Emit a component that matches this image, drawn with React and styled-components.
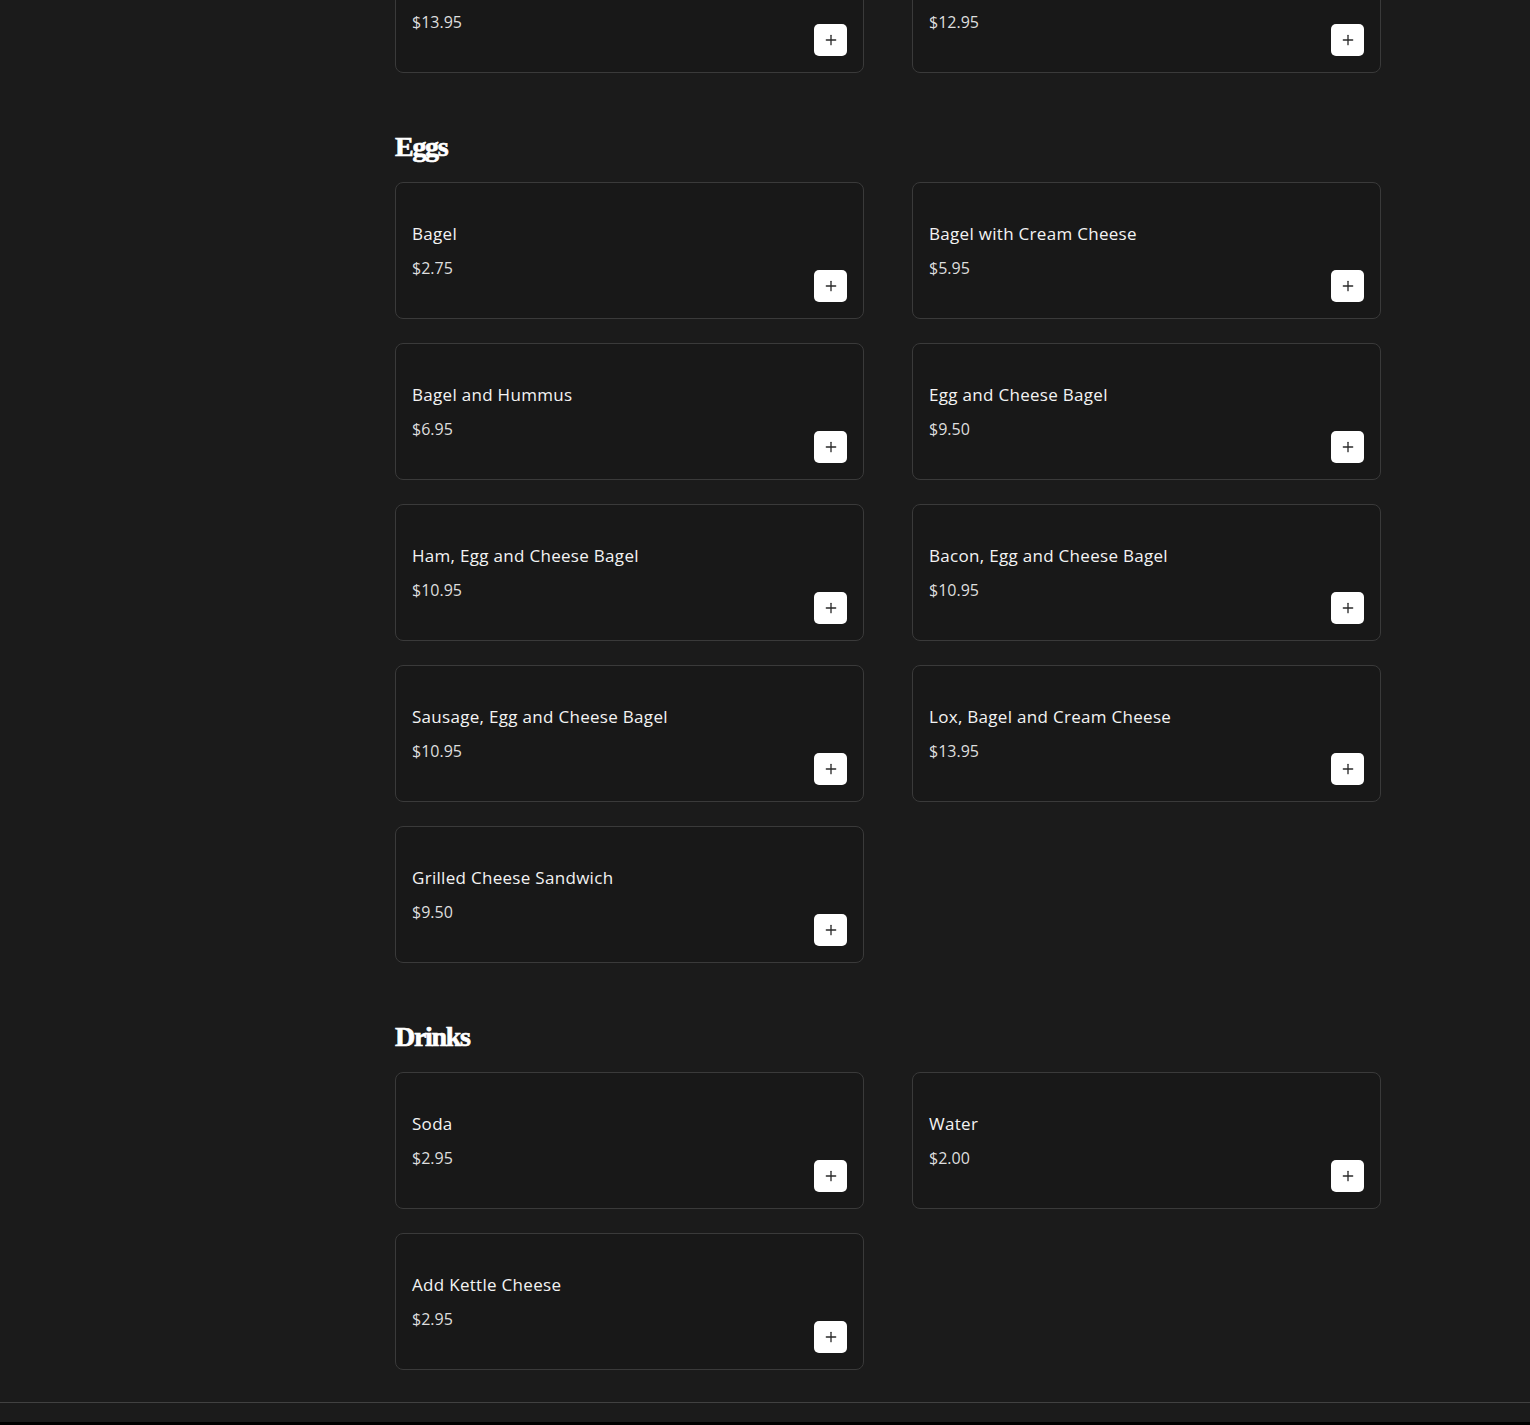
import React from "react";
import styled, { createGlobalStyle } from "styled-components";
import { Plus } from "lucide-react";

const Global = createGlobalStyle`
  html { background: #000; }
  body { margin: 0; background: #000; font-family: "Open Sans", "Noto Sans", sans-serif; }
  * { box-sizing: border-box; }
`;

const Page = styled.div`
  background: #1b1b1b;
  height: 1422px;
  overflow: hidden;
  display: flex;
  flex-direction: column;
`;

const Main = styled.main`
  width: 986px;
  margin-left: 395px;
  margin-top: -64px;
  display: flex;
  flex-direction: column;
  gap: 57px;
`;

const Section = styled.section`
  display: flex;
  flex-direction: column;
  gap: 18px;
`;

const Heading = styled.h2`
  margin: 0;
  font-family: "Liberation Serif", "DejaVu Serif", serif;
  font-weight: 700;
  font-size: 28px;
  line-height: 34px;
  letter-spacing: -1.3px;
  -webkit-text-stroke: 0.7px #ffffff;
  color: #ffffff;
`;

const Grid = styled.div`
  display: grid;
  grid-template-columns: 469px 469px;
  column-gap: 48px;
  row-gap: 24px;
`;

const Card = styled.div`
  height: 137px;
  padding: 16px;
  border: 1px solid #3a3a3a;
  border-radius: 8px;
  background: #181818;
  display: flex;
  align-items: center;
  justify-content: space-between;
`;

const Info = styled.div`
  display: flex;
  flex-direction: column;
  gap: 10px;
`;

const Title = styled.div`
  font-size: 17px;
  line-height: 24px;
  font-weight: 500;
  letter-spacing: 0.3px;
  color: #f3f3f3;
  visibility: ${(p) => (p.$hidden ? "hidden" : "visible")};
`;

const Price = styled.div`
  font-size: 16px;
  line-height: 24px;
  font-weight: 400;
  color: #dedede;
`;

const AddButton = styled.button`
  align-self: flex-end;
  width: 33px;
  height: 32px;
  padding: 0;
  border: none;
  border-radius: 5px;
  background: #ffffff;
  color: #2a2a2a;
  display: flex;
  align-items: center;
  justify-content: center;
  cursor: pointer;
`;

const Footer = styled.footer`
  margin-top: 32px;
  height: 21px;
  border-top: 1px solid #414141;
`;

const sections = [
  {
    name: null,
    offscreen: true,
    items: [
      ["Lox Platter", "$13.95"],
      ["Tuna Melt", "$12.95"],
    ],
  },
  {
    name: "Eggs",
    items: [
      ["Bagel", "$2.75"],
      ["Bagel with Cream Cheese", "$5.95"],
      ["Bagel and Hummus", "$6.95"],
      ["Egg and Cheese Bagel", "$9.50"],
      ["Ham, Egg and Cheese Bagel", "$10.95"],
      ["Bacon, Egg and Cheese Bagel", "$10.95"],
      ["Sausage, Egg and Cheese Bagel", "$10.95"],
      ["Lox, Bagel and Cream Cheese", "$13.95"],
      ["Grilled Cheese Sandwich", "$9.50"],
    ],
  },
  {
    name: "Drinks",
    items: [
      ["Soda", "$2.95"],
      ["Water", "$2.00"],
      ["Add Kettle Cheese", "$2.95"],
    ],
  },
];

function Item({ title, price, offscreen }) {
  return (
    <Card>
      <Info>
        <Title $hidden={offscreen}>{title}</Title>
        <Price>{price}</Price>
      </Info>
      <AddButton aria-label={`Add ${title}`}>
        <Plus size={16} strokeWidth={2} />
      </AddButton>
    </Card>
  );
}

export default function App() {
  return (
    <>
      <Global />
      <Page>
        <Main>
          {sections.map((s, i) => (
            <Section key={i}>
              {s.name && <Heading>{s.name}</Heading>}
              <Grid>
                {s.items.map(([t, p]) => (
                  <Item key={t} title={t} price={p} offscreen={s.offscreen} />
                ))}
              </Grid>
            </Section>
          ))}
        </Main>
        <Footer />
      </Page>
    </>
  );
}
